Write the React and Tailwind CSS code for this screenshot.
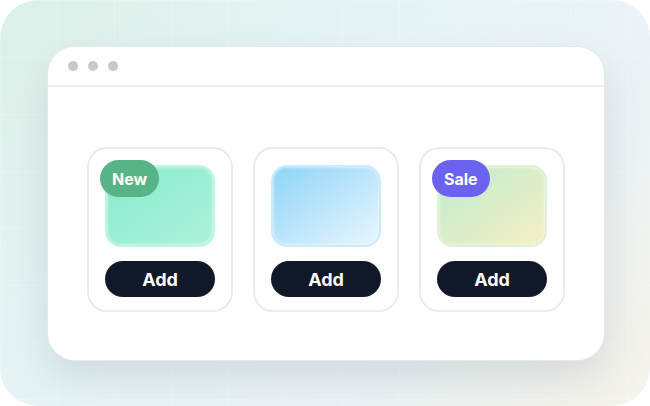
const products = [
  {
    badge: "New",
    badgeClass: "bg-[#58b486]",
    imageClass:
      "bg-gradient-to-br from-[#84ebcc] to-[#aef2dc] border-[#bdf4e2]",
  },
  {
    badge: null,
    imageClass:
      "bg-gradient-to-br from-[#8dd4f8] to-[#e8f6fe] border-[#c9ebfb]",
  },
  {
    badge: "Sale",
    badgeClass: "bg-[#6b63ef]",
    imageClass:
      "bg-gradient-to-br from-[#bdecce] to-[#f6efc4] border-[#dcf1d6]",
  },
];

const ProductCard = ({ badge, badgeClass, imageClass }) => (
  <div className="w-[146px] h-[165px] rounded-[20px] border-2 border-[#ebebec] bg-white flex flex-col items-center pt-[16px]">
    <div className="relative">
      <div
        className={`w-[110px] h-[82px] rounded-[16px] border-2 shadow-[inset_0_0_3px_rgba(255,255,255,0.9)] ${imageClass}`}
      />
      {badge && (
        <span
          className={`absolute -left-[5px] -top-[5px] h-[37px] px-[12px] rounded-full flex items-center text-white text-[16px] font-bold ${badgeClass}`}
        >
          {badge}
        </span>
      )}
    </div>
    <button className="mt-[14px] w-[110px] h-[36px] rounded-full bg-[#111827] text-white text-[18px] font-bold">
      Add
    </button>
  </div>
);

export default function App() {
  return (
    <div
      className="w-[650px] h-[406px] bg-white"
      style={{ fontFamily: "Inter, 'Noto Sans', sans-serif" }}
    >
      <div className="relative w-full h-full rounded-[38px] overflow-hidden bg-[linear-gradient(135deg,#dcf1e8_0%,#e8f4f8_45%,#ecf3f6_70%,#f6f3ea_100%)] px-[47px] pt-[46px]">
        {/* faint grid lines on the backdrop */}
        <div className="absolute inset-0 opacity-40 bg-[linear-gradient(to_right,rgba(255,255,255,0.5)_1px,transparent_1px),linear-gradient(to_bottom,rgba(255,255,255,0.5)_1px,transparent_1px)] bg-[size:57px_57px]" />
        <div className="relative w-[558px] h-[315px] rounded-[28px] bg-white border border-[#e6e7e9] shadow-[0_18px_40px_rgba(120,130,140,0.22)] flex flex-col">
          <div className="h-[40px] flex items-center gap-[10px] px-[20px] border-b-2 border-[#efefef]">
            <span className="w-[10px] h-[10px] rounded-full bg-[#c9c9cd]" />
            <span className="w-[10px] h-[10px] rounded-full bg-[#c9c9cd]" />
            <span className="w-[10px] h-[10px] rounded-full bg-[#c9c9cd]" />
          </div>
          <div className="flex justify-center gap-[20px] pt-[60px]">
            {products.map((p, i) => (
              <ProductCard key={i} {...p} />
            ))}
          </div>
        </div>
      </div>
    </div>
  );
}
